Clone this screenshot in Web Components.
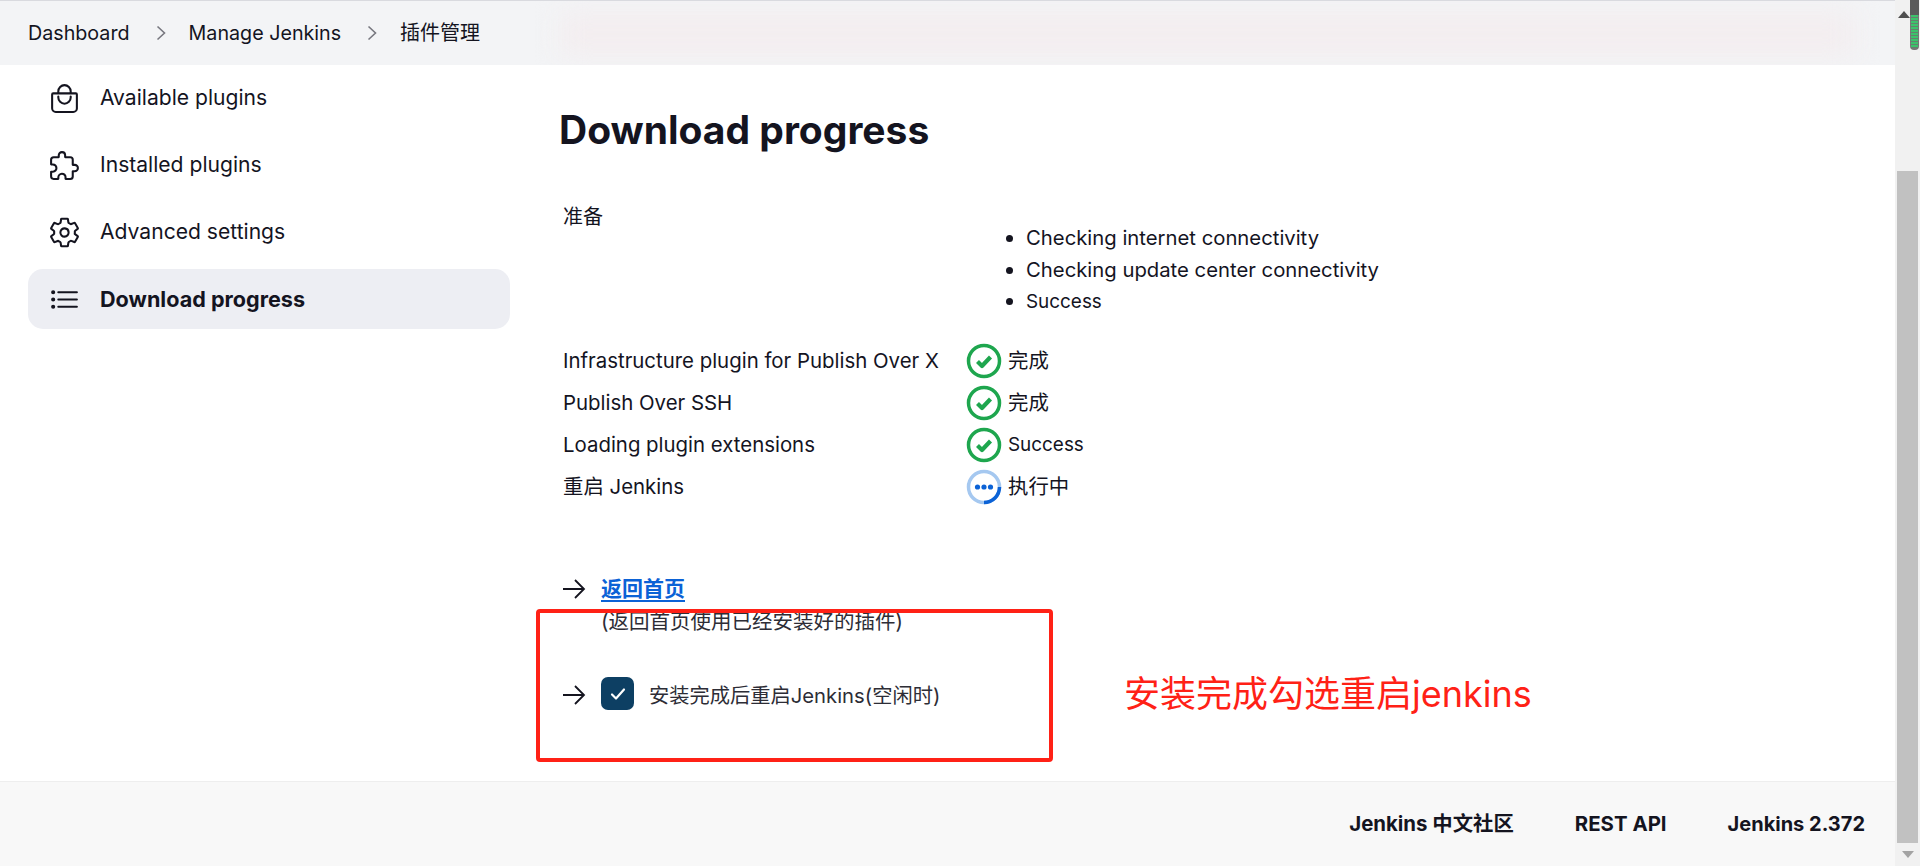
<!DOCTYPE html>
<html lang="zh-CN">
<head>
<meta charset="utf-8">
<title>Download progress</title>
<style>
  html, body { margin: 0; height: 866px; overflow: hidden; background: #fff; }
  body { font: 20px/30px Inter, "Noto Sans CJK SC", sans-serif; color: #14141f; }
</style>
</head>
<body>
<jk-app>
  <jk-breadcrumbs slot="top">
    <a>Dashboard</a><a>Manage Jenkins</a><a>插件管理</a>
  </jk-breadcrumbs>
  <jk-side-nav slot="side">
    <jk-nav-item icon="bag">Available plugins</jk-nav-item>
    <jk-nav-item icon="puzzle">Installed plugins</jk-nav-item>
    <jk-nav-item icon="gear">Advanced settings</jk-nav-item>
    <jk-nav-item icon="list" active>Download progress</jk-nav-item>
  </jk-side-nav>
  <jk-progress slot="main"></jk-progress>
  <jk-footer slot="bottom"></jk-footer>
  <jk-scrollbar slot="bar"></jk-scrollbar>
</jk-app>

<script>
class JkApp extends HTMLElement {
  connectedCallback() {
    this.attachShadow({ mode: 'open' });
    this.shadowRoot.innerHTML = `
      <style>
        :host { display: flex; width: 1920px; height: 866px; position: relative; }
        .page { flex: 1; min-width: 0; display: flex; flex-direction: column; }
        .body { flex: 1; min-height: 0; display: flex; }
      </style>
      <div class="page">
        <slot name="top"></slot>
        <div class="body">
          <slot name="side"></slot>
          <slot name="main"></slot>
        </div>
        <slot name="bottom"></slot>
      </div>
      <slot name="bar"></slot>
    `;
  }
}

class JkBreadcrumbs extends HTMLElement {
  connectedCallback() {
    this.attachShadow({ mode: 'open' });
    const items = [...this.querySelectorAll('a')].map(a => a.textContent);
    const chevron = `<svg class="sep" width="10" height="16" viewBox="0 0 10 16"><path d="M1.5 1.5 8.5 8l-7 6.5" fill="none" stroke="#77777f" stroke-width="1.6"/></svg>`;
    this.shadowRoot.innerHTML = `
      <style>
        :host {
          display: flex;
          align-items: center;
          flex: none;
          height: 64px;
          padding: 0 0 0 28px;
          position: relative;
          background: #f3f4f6;
          border-top: 1px solid #d9dadf;
          font-size: 19.7px;
          overflow: hidden;
        }
        span { position: relative; }
        span:last-child { font-size: 20px; }
        .sep { position: relative; margin: 0 23px 0 26px; }
        .glow {
          position: absolute;
          left: 560px;
          right: 40px;
          top: 12px;
          bottom: 10px;
          background: #f3edef;
          filter: blur(14px);
        }
      </style>
      <div class="glow"></div>
      ${items.map(t => `<span>${t}</span>`).join(chevron)}
    `;
  }
}

class JkSideNav extends HTMLElement {
  connectedCallback() {
    this.attachShadow({ mode: 'open' });
    this.shadowRoot.innerHTML = `
      <style>
        :host {
          display: flex;
          flex-direction: column;
          flex: none;
          gap: 7.17px;
          box-sizing: border-box;
          width: 559px;
          padding: 3px 49px 0 28px;
          font-size: 21.1px;
        }
      </style>
      <slot></slot>
    `;
  }
}

const NAV_ICONS = {
  bag: `<path d="M80 176a16 16 0 00-16 16v216c0 30.24 25.76 56 56 56h272c30.24 0 56-24.51 56-54.75V192a16 16 0 00-16-16zM160 176v-32a96 96 0 0196-96h0a96 96 0 0196 96v32"/><path d="M160 224v16a96 96 0 0096 96h0a96 96 0 0096-96v-16"/>`,
  puzzle: `<path d="M413.66 246.1H386a2 2 0 01-2-2v-77.24A38.86 38.86 0 00345.14 128H267.9a2 2 0 01-2-2V98.34c0-27.14-21.5-49.86-48.64-50.33a49.53 49.53 0 00-50.4 49.51V126a2 2 0 01-2 2H87.62A39.74 39.74 0 0048 167.62V238a2 2 0 002 2h26.91c29.37 0 53.68 25.48 54.09 54.85.42 29.87-23.51 57.15-53.29 57.15H50a2 2 0 00-2 2v70.38A39.74 39.74 0 0087.62 464H158a2 2 0 002-2v-20.93c0-30.28 24.75-56.35 55-57.06 30.1-.7 57 20.31 57 50.28V462a2 2 0 002 2h71.14A38.86 38.86 0 00384 425.14v-78a2 2 0 012-2h28.48c27.63 0 49.52-22.67 49.52-50.4s-23.2-48.64-50.34-48.64z"/>`,
  gear: `<path d="M262.29 192.31a64 64 0 1057.4 57.4 64.13 64.13 0 00-57.4-57.4zM416.39 256a154.34 154.34 0 01-1.53 20.79l45.21 35.46a10.81 10.81 0 012.45 13.75l-42.77 74a10.81 10.81 0 01-13.14 4.59l-44.9-18.08a16.11 16.11 0 00-15.17 1.75A164.48 164.48 0 01325 400.8a15.94 15.94 0 00-8.82 12.14l-6.73 47.89a11.08 11.08 0 01-10.68 9.17h-85.54a11.11 11.11 0 01-10.69-8.87l-6.72-47.82a16.07 16.07 0 00-9-12.22 155.3 155.3 0 01-21.46-12.57 16 16 0 00-15.11-1.71l-44.89 18.07a10.81 10.81 0 01-13.14-4.58l-42.77-74a10.8 10.8 0 012.45-13.75l38.21-30a16.05 16.05 0 006-14.08c-.36-4.17-.58-8.33-.58-12.5s.21-8.27.58-12.35a16 16 0 00-6.07-13.94l-38.19-30A10.81 10.81 0 0149.48 186l42.77-74a10.81 10.81 0 0113.14-4.59l44.9 18.08a16.11 16.11 0 0015.17-1.75A164.48 164.48 0 01187 111.2a15.94 15.94 0 008.82-12.14l6.73-47.89A11.08 11.08 0 01213.23 42h85.54a11.11 11.11 0 0110.69 8.87l6.72 47.82a16.07 16.07 0 009 12.22 155.3 155.3 0 0121.46 12.57 16 16 0 0015.11 1.71l44.89-18.07a10.81 10.81 0 0113.14 4.58l42.77 74a10.8 10.8 0 01-2.45 13.75l-38.21 30a16.05 16.05 0 00-6.05 14.08c.33 4.14.55 8.3.55 12.47z"/>`,
  list: `<path d="M160 144h288M160 256h288M160 368h288"/><circle cx="80" cy="144" r="16"/><circle cx="80" cy="256" r="16"/><circle cx="80" cy="368" r="16"/>`
};

class JkNavItem extends HTMLElement {
  connectedCallback() {
    this.attachShadow({ mode: 'open' });
    const icon = NAV_ICONS[this.getAttribute('icon')];
    this.shadowRoot.innerHTML = `
      <style>
        :host {
          display: flex;
          align-items: center;
          gap: 19px;
          height: 60px;
          padding-left: 20px;
          border-radius: 15px;
        }
        :host([active]) { background: #edeef3; font-weight: 700; font-size: 21.6px; }
        svg { flex: none; fill: none; stroke: currentColor; stroke-width: 32; stroke-linecap: round; stroke-linejoin: round; }
      </style>
      <svg width="33" height="33" viewBox="0 0 512 512">${icon}</svg>
      <slot></slot>
    `;
  }
}

class JkStatus extends HTMLElement {
  connectedCallback() {
    this.attachShadow({ mode: 'open' });
    const running = this.hasAttribute('running');
    const glyph = running
      ? `<circle cx="18" cy="18" r="15.5" fill="none" stroke="#a5c8f0" stroke-width="3.5"/>
         <path d="M33.5 18A15.5 15.5 0 0 1 18 33.5" fill="none" stroke="#0b62d6" stroke-width="3.5"/>
         <circle cx="11.5" cy="18" r="2.6" fill="#0b62d6"/><circle cx="18" cy="18" r="2.6" fill="#0b62d6"/><circle cx="24.5" cy="18" r="2.6" fill="#0b62d6"/>`
      : `<circle cx="18" cy="18" r="15.5" fill="none" stroke="#1ea64e" stroke-width="3.5"/>
         <path d="M11.5 18.5 16 23l8.5-9" fill="none" stroke="#1ea64e" stroke-width="4.2" stroke-linejoin="round"/>`;
    this.shadowRoot.innerHTML = `
      <style>
        :host { display: flex; align-items: center; gap: 6px; margin-left: -1px; }
        svg { flex: none; }
      </style>
      <svg width="36" height="36" viewBox="0 0 36 36">${glyph}</svg>
      <slot></slot>
    `;
  }
}

class JkArrow extends HTMLElement {
  connectedCallback() {
    this.attachShadow({ mode: 'open' });
    this.shadowRoot.innerHTML = `
      <style>:host { display: block; width: 39px; height: 22px; flex: none; }</style>
      <svg width="24" height="22" viewBox="0 0 24 22"><path d="M1 11h21M13 2l9 9-9 9" fill="none" stroke="#14141f" stroke-width="1.8"/></svg>
    `;
  }
}

class JkProgress extends HTMLElement {
  connectedCallback() {
    this.attachShadow({ mode: 'open' });
    this.shadowRoot.innerHTML = `
      <style>
        :host { display: block; flex: 1; min-width: 0; position: relative; padding-top: 40px; }
        h1 { margin: 0 0 47px; font-size: 39px; line-height: 50px; font-weight: 700; }
        .prep { display: grid; grid-template-columns: 404px 1fr; padding-left: 4px; }
        ul { margin: 20px 0 0; padding: 0 0 0 59px; line-height: 31.5px; font-size: 20.3px; }
        .tight { font-size: 18.9px; }
        .rows {
          display: grid;
          grid-template-columns: 404px 1fr;
          grid-auto-rows: 42px;
          align-items: center;
          margin-top: 22px;
          padding-left: 4px;
          font-size: 20.4px;
        }
        .actions { margin-top: 66px; display: flex; flex-direction: column; }
        .act { display: flex; align-items: center; padding-left: 3px; }
        a { color: #0b62d6; font-size: 21px; font-weight: 700; text-decoration: underline; text-underline-offset: 4px; }
        .hint { margin: 3px 0 0 42px; color: #2d2d36; font-size: 20.5px; }
        .check-row { margin-top: 42px; }
        .box {
          flex: none;
          width: 33px;
          height: 33px;
          margin-top: -2px;
          border-radius: 7px;
          background: #0d3f63;
          display: flex;
          align-items: center;
          justify-content: center;
          margin-right: 15px;
        }
        .label { color: #2d2d36; font-size: 20.25px; padding-top: 2px; }
        .note-box {
          position: absolute;
          left: -23px;
          top: 544px;
          width: 509px;
          height: 145px;
          border: 4px solid #ff2116;
          border-radius: 4px;
        }
        .note {
          position: absolute;
          left: 565px;
          top: 604px;
          color: #ff2116;
          font-size: 36px;
          line-height: 50px;
          white-space: nowrap;
        }
      </style>
      <h1>Download progress</h1>
      <div class="prep">
        <div>准备</div>
        <ul>
          <li>Checking internet connectivity</li>
          <li>Checking update center connectivity</li>
          <li><span class="tight">Success</span></li>
        </ul>
      </div>
      <div class="rows">
        <div>Infrastructure plugin for Publish Over X</div><jk-status>完成</jk-status>
        <div>Publish Over SSH</div><jk-status>完成</jk-status>
        <div>Loading plugin extensions</div><jk-status><span class="tight">Success</span></jk-status>
        <div>重启 Jenkins</div><jk-status running>执行中</jk-status>
      </div>
      <div class="actions">
        <div class="act"><jk-arrow></jk-arrow><a>返回首页</a></div>
        <div class="hint">(返回首页使用已经安装好的插件)</div>
        <div class="act check-row">
          <jk-arrow></jk-arrow>
          <span class="box"><svg width="20" height="20" viewBox="0 0 20 20"><path d="M4 10.5 8 14.5l8-9" fill="none" stroke="#fff" stroke-width="2.2" stroke-linecap="round" stroke-linejoin="round"/></svg></span>
          <span class="label">安装完成后重启Jenkins(空闲时)</span>
        </div>
      </div>
      <div class="note-box"></div>
      <div class="note">安装完成勾选重启jenkins</div>
    `;
  }
}

class JkFooter extends HTMLElement {
  connectedCallback() {
    this.attachShadow({ mode: 'open' });
    this.shadowRoot.innerHTML = `
      <style>
        :host {
          display: flex;
          flex: none;
          justify-content: flex-end;
          align-items: center;
          gap: 61px;
          height: 85px;
          padding: 0 30px 0 0;
          box-sizing: border-box;
          background: #f8f8f8;
          border-top: 1px solid #eeeeee;
          font-weight: 700;
        }
        .wide { font-size: 20.4px; }
      </style>
      <span class="wide">Jenkins 中文社区</span><span class="wide">REST API</span><span>Jenkins 2.372</span>
    `;
  }
}

class JkScrollbar extends HTMLElement {
  connectedCallback() {
    this.attachShadow({ mode: 'open' });
    this.shadowRoot.innerHTML = `
      <style>
        :host {
          display: flex;
          flex-direction: column;
          flex: none;
          width: 25px;
          position: relative;
          background: #f1f1f1;
        }
        .thumb { margin: 171px 2px 0; width: 21px; height: 672px; background: #c1c1c1; }
        .up, .down { position: absolute; left: 7px; width: 0; height: 0; border-left: 6px solid transparent; border-right: 6px solid transparent; }
        .up { top: 11px; left: 3px; border-bottom: 7px solid #505050; }
        .down { top: 851px; border-top: 7px solid #a3a3a3; }
        .meter {
          position: absolute;
          left: 15px;
          top: 0;
          width: 9px;
          height: 50px;
          padding-top: 15px;
          box-sizing: border-box;
          border-radius: 0 0 4px 4px;
          background: linear-gradient(#5a5a5a 15px, #777 15px);
        }
        .meter i {
          display: block;
          margin: 0 1px;
          height: 33px;
          background: repeating-linear-gradient(#3cc36b 0 2px, #66806f 2px 3px);
        }
      </style>
      <div class="thumb"></div>
      <div class="up"></div>
      <div class="down"></div>
      <div class="meter"><i></i></div>
    `;
  }
}

customElements.define('jk-app', JkApp);
customElements.define('jk-breadcrumbs', JkBreadcrumbs);
customElements.define('jk-side-nav', JkSideNav);
customElements.define('jk-nav-item', JkNavItem);
customElements.define('jk-status', JkStatus);
customElements.define('jk-arrow', JkArrow);
customElements.define('jk-progress', JkProgress);
customElements.define('jk-footer', JkFooter);
customElements.define('jk-scrollbar', JkScrollbar);
</script>
</body>
</html>
